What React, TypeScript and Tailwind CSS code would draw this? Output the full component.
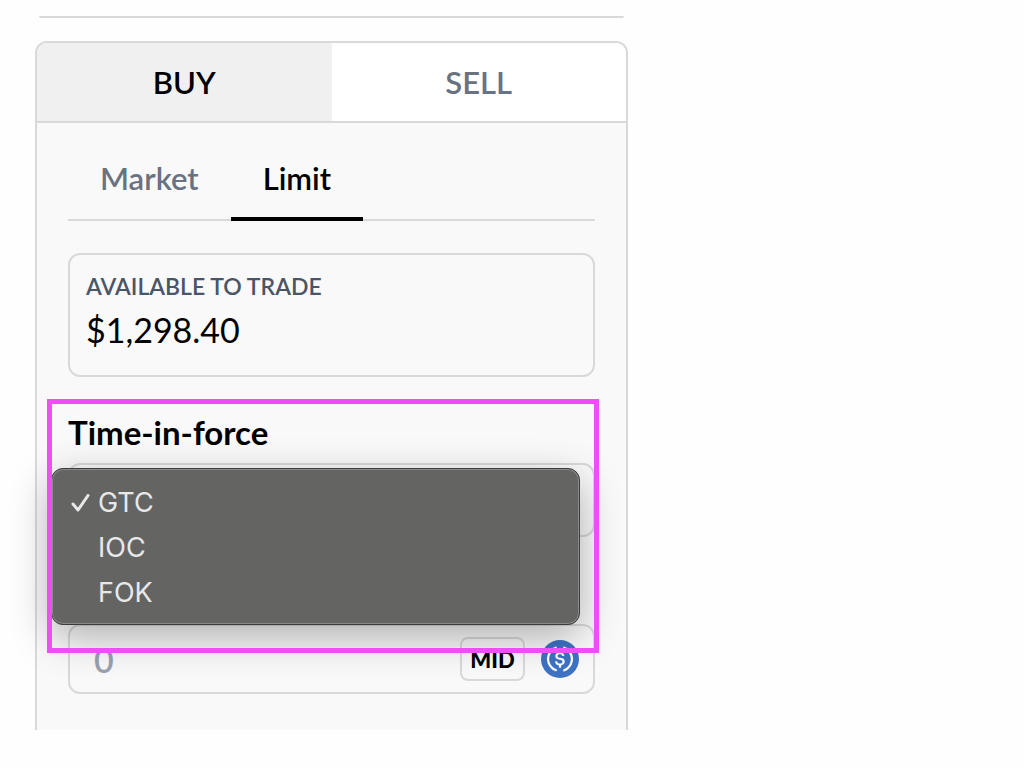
import { useState } from "react";

type Side = "BUY" | "SELL";
type OrderType = "Market" | "Limit";

const sides: Side[] = ["BUY", "SELL"];
const orderTypes: OrderType[] = ["Market", "Limit"];
const timeInForce = ["GTC", "IOC", "FOK"];

export default function App() {
  const [side, setSide] = useState<Side>("BUY");
  const [orderType, setOrderType] = useState<OrderType>("Limit");
  const [tif, setTif] = useState("GTC");
  const [price, setPrice] = useState("");

  return (
    <div className="min-h-screen bg-[#fefefe] font-['Lato',sans-serif] text-black">
      <main className="w-full max-w-[663px] px-[35px] pt-4">
        <div className="mx-1 h-0.5 rounded-b-xl bg-[#d9d9d9]" />

        <section className="mt-[23px] rounded-t-xl border-2 border-b-0 border-[#d9d9d9] bg-[#f9f9f9] pb-9">
          <div className="flex overflow-hidden rounded-t-[10px] border-b-2 border-[#d9d9d9]">
            {sides.map((s) => (
              <button
                key={s}
                type="button"
                onClick={() => setSide(s)}
                className={
                  s === side
                    ? "h-[78px] flex-1 bg-[#f0f0f0] text-[31px] font-semibold"
                    : "h-[78px] flex-1 bg-white text-[31px] font-semibold text-gray-500"
                }
              >
                {s}
              </button>
            ))}
          </div>

          <div className="px-[31px] pt-4">
            <div className="flex border-b-2 border-[#d9d9d9]">
              {orderTypes.map((t) => (
                <button
                  key={t}
                  type="button"
                  onClick={() => setOrderType(t)}
                  className={
                    t === orderType
                      ? "-mb-0.5 h-[82px] border-b-4 border-black px-8 text-[31px] font-semibold"
                      : "-mb-0.5 h-[82px] border-b-4 border-transparent px-8 text-[31px] font-semibold text-gray-500"
                  }
                >
                  {t}
                </button>
              ))}
            </div>

            <div className="mt-8 rounded-xl border-2 border-[#d9d9d9] px-4 pt-[15px] pb-[23px]">
              <p className="text-[23px] leading-8 font-semibold text-gray-600">AVAILABLE TO TRADE</p>
              <p className="mt-1.5 text-[34px] leading-[44px]">$1,298.40</p>
            </div>

            <div className="relative mt-6">
              <label htmlFor="tif" className="flex h-[62px] items-center text-[33px] leading-8 font-bold">
                Time-in-force
              </label>
              <select
                id="tif"
                value={tif}
                onChange={(e) => setTif(e.target.value)}
                className="block h-[74px] w-full appearance-none rounded-xl border-2 border-[#d9d9d9] px-6 text-[28px]"
              >
                {timeInForce.map((o) => (
                  <option key={o}>{o}</option>
                ))}
              </select>

              <TifMenu value={tif} onSelect={setTif} />

              {/* callout around the time-in-force control */}
              <div className="pointer-events-none absolute -top-0.5 -right-1 -left-[21px] z-20 h-[254px] border-[5px] border-[#ee4ef5]" />
            </div>

            <div className="mt-[87px] flex h-[70px] items-center rounded-xl border-2 border-[#d9d9d9] pr-3.5 pl-6">
              <input
                aria-label="Limit price"
                value={price}
                onChange={(e) => setPrice(e.target.value)}
                placeholder="0"
                className="min-w-0 flex-1 text-[34px] font-semibold outline-none placeholder:text-gray-400"
              />
              <button
                type="button"
                className="h-11 w-[65px] rounded-lg border-2 border-[#d9d9d9] text-[22px] font-black"
              >
                MID
              </button>
              <UsdcIcon />
            </div>
          </div>
        </section>
      </main>
    </div>
  );
}

function TifMenu({ value, onSelect }: { value: string; onSelect: (v: string) => void }) {
  return (
    <div
      role="listbox"
      aria-label="Time-in-force"
      className="absolute top-[67px] right-[15px] -left-[17px] z-10 rounded-xl border border-[#3c3c3c] bg-[#646463] pt-3 pb-2 font-['Inter',sans-serif] text-[27px] text-[#e8e8e8] shadow-[0_12px_40px_rgba(0,0,0,0.3)] inset-ring inset-ring-[#8a8a8a]"
    >
      {timeInForce.map((o) => (
        <button
          key={o}
          type="button"
          role="option"
          aria-selected={o === value}
          onClick={() => onSelect(o)}
          className="flex h-[45px] w-full items-center pl-[18px]"
        >
          <span className="w-7">
            {o === value && (
              <svg width="20" height="20" viewBox="0 0 20 20" fill="none" aria-hidden>
                <path
                  d="M3 10 8 16 18 1.5"
                  stroke="currentColor"
                  strokeWidth="3"
                  strokeLinecap="round"
                  strokeLinejoin="round"
                />
              </svg>
            )}
          </span>
          {o}
        </button>
      ))}
    </div>
  );
}

function UsdcIcon() {
  return (
    <svg className="ml-4 size-[38px] shrink-0" viewBox="0 0 32 32" role="img" aria-label="USDC">
      <circle cx="16" cy="16" r="16" fill="#3E73C4" />
      <g fill="#fff">
        <path d="M20.022 18.124c0-2.124-1.28-2.852-3.84-3.156-1.828-.243-2.193-.728-2.193-1.578 0-.85.61-1.396 1.828-1.396 1.097 0 1.707.364 2.011 1.275a.458.458 0 00.427.303h.975a.416.416 0 00.427-.425v-.06a3.04 3.04 0 00-2.743-2.489V9.142c0-.243-.183-.425-.487-.486h-.915c-.243 0-.426.182-.487.486v1.396c-1.829.242-2.986 1.456-2.986 2.974 0 2.002 1.218 2.791 3.778 3.095 1.707.303 2.255.668 2.255 1.639 0 .97-.853 1.638-2.011 1.638-1.585 0-2.133-.667-2.316-1.578-.06-.242-.244-.364-.427-.364h-1.036a.416.416 0 00-.426.425v.06c.243 1.518 1.219 2.61 3.23 2.914v1.457c0 .242.183.425.487.485h.915c.243 0 .426-.182.487-.485V21.34c1.829-.303 3.047-1.578 3.047-3.217z" />
        <path d="M12.892 24.497c-4.754-1.7-7.192-6.98-5.424-11.653.914-2.55 2.925-4.491 5.424-5.402.244-.121.365-.303.365-.607v-.85c0-.242-.121-.424-.365-.485-.061 0-.183 0-.244.06a10.895 10.895 0 00-7.13 13.717c1.096 3.4 3.717 6.01 7.13 7.102.244.121.488 0 .548-.243.061-.06.061-.122.061-.243v-.85c0-.182-.182-.424-.365-.546zm6.46-18.936c-.244-.122-.488 0-.548.242-.061.061-.061.122-.061.243v.85c0 .243.182.485.365.607 4.754 1.7 7.192 6.98 5.424 11.653-.914 2.55-2.925 4.491-5.424 5.402-.244.121-.365.303-.365.607v.85c0 .242.121.424.365.485.061 0 .183 0 .244-.06a10.895 10.895 0 007.13-13.717c-1.096-3.46-3.778-6.07-7.13-7.162z" />
      </g>
    </svg>
  );
}
